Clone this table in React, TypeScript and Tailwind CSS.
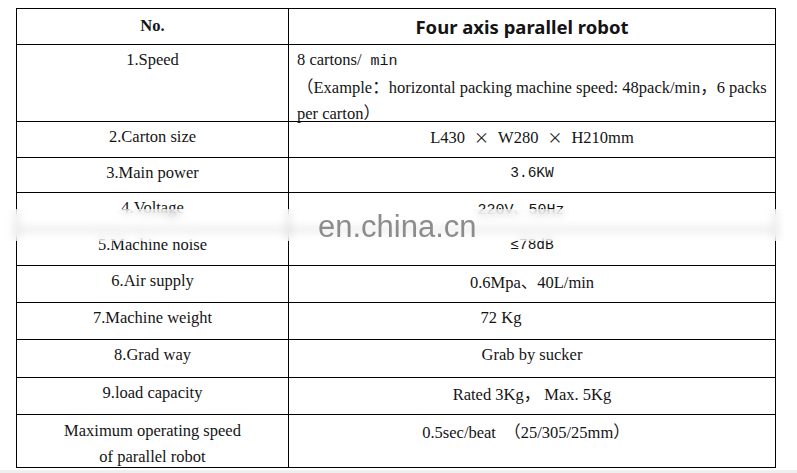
import React from "react";

const serif = "font-['Liberation_Serif','Noto_Sans_CJK_SC',serif]";
const cjk = "font-['Noto_Sans_CJK_SC',sans-serif]";
const mono = "font-['Liberation_Mono',monospace]";

type Row = { h: string; left: React.ReactNode; right: React.ReactNode; rightAlign?: "center" | "left" };

export default function App() {
  const rows: Row[] = [
    {
      h: "h-[77px]",
      left: "1.Speed",
      rightAlign: "left",
      right: (
        <div className="pl-[8px] pr-[6px]">
          <div>
            8 cartons/<span className={`${mono} text-[15px]`}> min</span>
          </div>
          <div>
            <span className={cjk}>（</span>Example<span className={cjk}>：</span>horizontal packing machine speed: 48pack/min<span className={cjk}>，</span>6 packs
          </div>
          <div>
            per carton<span className={cjk}>）</span>
          </div>
        </div>
      ),
    },
    {
      h: "h-[36px]",
      left: "2.Carton size",
      right: (
        <span className="whitespace-pre">
          L430<span className={`${cjk} text-[15px] mx-[9px]`}>×</span>W280<span className={`${cjk} text-[15px] mx-[9px]`}>×</span>H210mm
        </span>
      ),
    },
    { h: "h-[35px]", left: "3.Main power", right: <span className={`${mono} text-[14.5px]`}>3.6KW</span> },
    {
      h: "h-[37px]",
      left: "4.Voltage",
      right: (
        <span className={`${mono} text-[15px] whitespace-pre pr-[22px]`}>
          220V<span className={cjk}>、</span>50Hz
        </span>
      ),
    },
    { h: "h-[36px]", left: "5.Machine noise", right: <span className={`${mono} text-[14.5px]`}>≤78dB</span> },
    {
      h: "h-[37px]",
      left: "6.Air supply",
      right: (
        <span className="whitespace-pre">
          0.6Mpa<span className={cjk}>、</span>40L/min
        </span>
      ),
    },
    { h: "h-[37px]", left: "7.Machine weight", right: <span className="pr-[62px]">72 Kg</span> },
    { h: "h-[38px]", left: "8.Grad way", right: "Grab by sucker" },
    {
      h: "h-[37px]",
      left: "9.load capacity",
      right: (
        <span className="whitespace-pre">
          Rated 3Kg<span className={cjk}>，</span> Max. 5Kg
        </span>
      ),
    },
    {
      h: "h-[52px]",
      left: (
        <div className="leading-[26px]">
          <div>Maximum operating speed</div>
          <div>of parallel robot</div>
        </div>
      ),
      right: (
        <span className="whitespace-pre pr-[12px] leading-[26px]">
          0.5sec/beat  <span className={cjk}>（</span>25/305/25mm<span className={cjk}>）</span>
        </span>
      ),
    },
  ];

  return (
    <div className={`relative w-[797px] h-[473px] bg-white overflow-hidden ${serif} text-[16.5px] text-[#141414]`}>
      <div className="flex flex-col h-full">
        <div className="pt-[8px] pl-[16px]">
          <div className="w-[760px] border border-black flex flex-col">
            <div className="flex h-[36px] border-b border-black">
              <div className="w-[272px] border-r border-black flex items-center justify-center font-bold text-[16.5px]">
                No.
              </div>
              <div className="flex-1 flex items-center justify-center pr-[20px] font-['Noto_Sans',sans-serif] font-bold text-[18.5px]">
                Four axis parallel robot
              </div>
            </div>
            {rows.map((r, i) => (
              <div key={i} className={`flex ${r.h} ${i < rows.length - 1 ? "border-b border-black" : ""}`}>
                <div className="w-[272px] border-r border-black flex justify-center text-center pt-[3px] leading-[24px]">
                  {r.left}
                </div>
                <div
                  className={`flex-1 flex pt-[3px] leading-[24px] ${
                    r.rightAlign === "left" ? "justify-start" : "justify-center"
                  }`}
                >
                  {r.right}
                </div>
              </div>
            ))}
          </div>
        </div>
        <div className="flex-1" />
        <div className="h-[3px] bg-[#efefef]" />
      </div>

      {/* watermark */}
      <div className="absolute left-0 top-[209px] w-[797px] h-[32px] bg-white/55 backdrop-blur-[4px]" />
      <div className="absolute left-[318px] top-[211px] font-['Liberation_Sans',Arial,sans-serif] text-[31px] leading-[31px] text-[#8c8c8c]">
        en.china.cn
      </div>
    </div>
  );
}
